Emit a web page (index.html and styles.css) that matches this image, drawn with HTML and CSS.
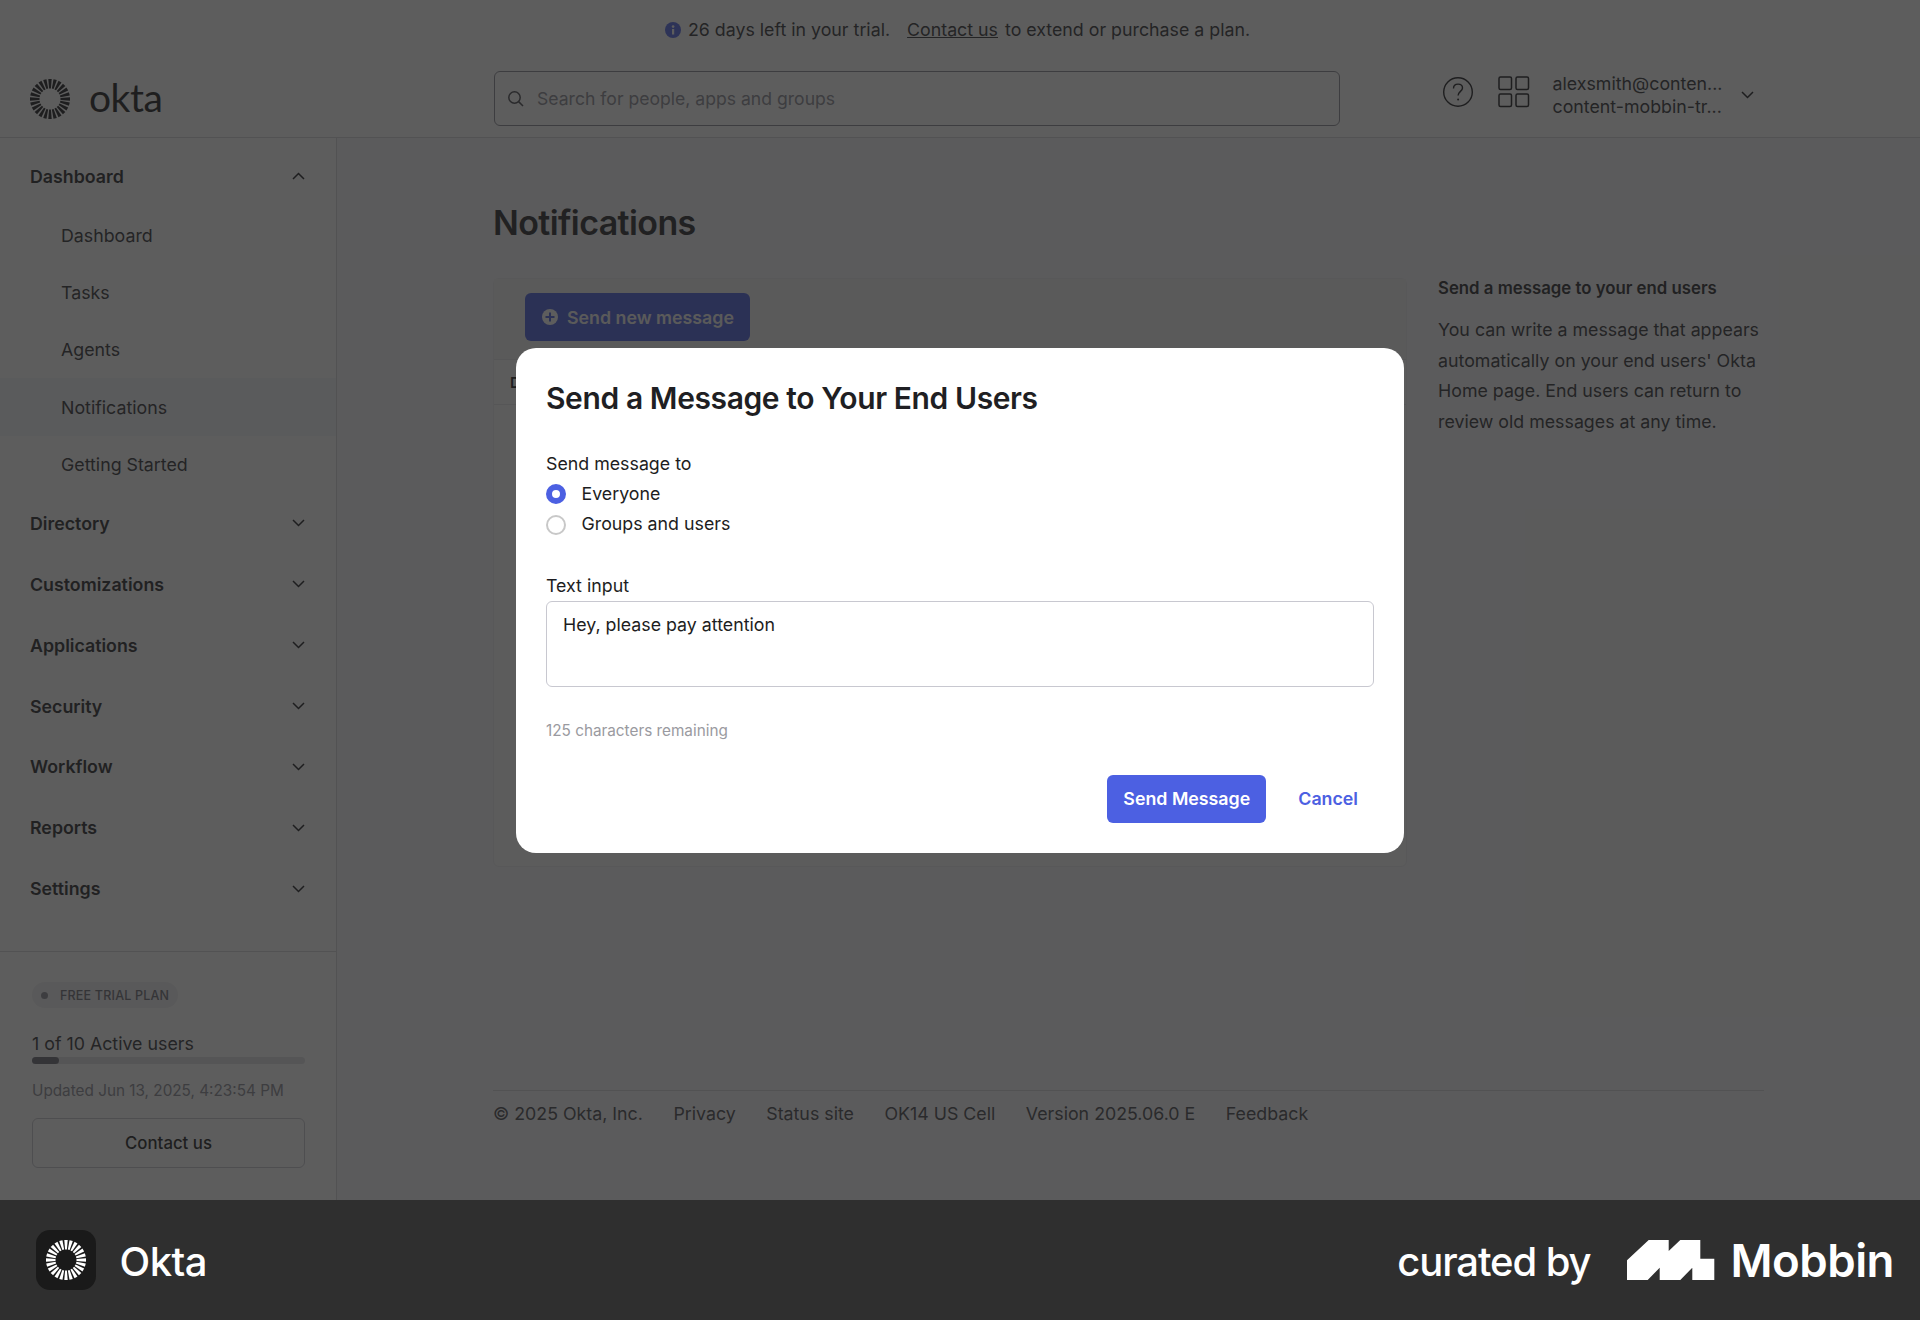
FILE: index.html
```html
<!DOCTYPE html>
<html lang="en">
<head>
<meta charset="utf-8">
<title>Okta - Notifications</title>
<link rel="stylesheet" href="styles.css">
</head>
<body>
<svg class="defs" width="0" height="0" aria-hidden="true">
  <defs>
    <g id="sunburst">
      <g id="ray-set">
        <polygon points="-.9,-10.500 .9,-10.500 1.700,-20 -1.700,-20"/>
        <polygon points="-.9,-10.500 .9,-10.500 1.700,-20 -1.700,-20" transform="rotate(15)"/>
        <polygon points="-.9,-10.500 .9,-10.500 1.700,-20 -1.700,-20" transform="rotate(30)"/>
        <polygon points="-.9,-10.500 .9,-10.500 1.700,-20 -1.700,-20" transform="rotate(45)"/>
      </g>
      <use href="#ray-set" transform="rotate(60)"/>
      <use href="#ray-set" transform="rotate(120)"/>
      <use href="#ray-set" transform="rotate(180)"/>
      <use href="#ray-set" transform="rotate(240)"/>
      <use href="#ray-set" transform="rotate(300)"/>
    </g>
    <polyline id="chev-down" points="1,1 6.5,6.5 12,1" fill="none" stroke-width="1.5"/>
  </defs>
</svg>
<div class="page">
  <div class="app">
    <div class="banner">
      <svg class="info" width="16" height="16" viewBox="0 0 16 16"><circle cx="8" cy="8" r="8" fill="#5468e8"/><rect x="7" y="7" width="2.2" height="5.5" fill="#fff"/><circle cx="8.1" cy="4.6" r="1.3" fill="#fff"/></svg>
      <span>26 days left in your trial.</span>
      <a class="banner-link">Contact us</a>
      <span class="banner-tail">to extend or purchase a plan.</span>
    </div>
    <header class="topbar">
      <div class="brand">
        <svg class="brand-mark" width="42" height="42" viewBox="-21 -21 42 42" fill="#1d1d21"><use href="#sunburst"/></svg>
        <span class="brand-name">okta</span>
      </div>
      <div class="search">
        <svg width="18" height="18" viewBox="0 0 18 18" fill="none" stroke="#4a4a50" stroke-width="1.5"><circle cx="7.5" cy="7.5" r="5.7"/><line x1="11.6" y1="11.6" x2="16" y2="16"/></svg>
        <span>Search for people, apps and groups</span>
      </div>
      <div class="top-actions">
        <svg class="help" width="32" height="32" viewBox="0 0 32 32" fill="none" stroke="#1d1d21" stroke-width="1.4"><circle cx="16" cy="16" r="14.3"/><path d="M11.5 12.4c0-2.6 2-4.3 4.6-4.3 2.5 0 4.4 1.6 4.4 3.9 0 3.3-4.4 3.6-4.4 7.6"/><circle cx="16.1" cy="23.4" r="1" fill="#1d1d21" stroke="none"/></svg>
        <svg class="apps" width="32" height="32" viewBox="0 0 32 32" fill="none" stroke="#1d1d21" stroke-width="1.5"><rect x="1" y="1" width="12.5" height="12.5" rx="1.5"/><rect x="18" y="1" width="12.5" height="12.5" rx="1.5"/><rect x="1" y="18" width="12.5" height="12.5" rx="1.5"/><rect x="18" y="18" width="12.5" height="12.5" rx="1.5"/></svg>
        <div class="account">
          <span>alexsmith@conten...</span>
          <span>content-mobbin-tr...</span>
        </div>
        <svg class="account-chev" width="13" height="8" viewBox="0 0 13 8" stroke="#1d1d21"><use href="#chev-down"/></svg>
      </div>
    </header>
    <div class="body">
      <aside class="sidebar">
        <nav class="nav">
          <div class="nav-head nav-first"><span>Dashboard</span><svg width="13" height="8" viewBox="0 0 13 8" stroke="#1d1d21" class="flip"><use href="#chev-down"/></svg></div>
          <a class="nav-sub">Dashboard</a>
          <a class="nav-sub">Tasks</a>
          <a class="nav-sub">Agents</a>
          <a class="nav-sub nav-active">Notifications</a>
          <a class="nav-sub">Getting Started</a>
          <div class="nav-head"><span>Directory</span><svg width="13" height="8" viewBox="0 0 13 8" stroke="#1d1d21"><use href="#chev-down"/></svg></div>
          <div class="nav-head"><span>Customizations</span><svg width="13" height="8" viewBox="0 0 13 8" stroke="#1d1d21"><use href="#chev-down"/></svg></div>
          <div class="nav-head"><span>Applications</span><svg width="13" height="8" viewBox="0 0 13 8" stroke="#1d1d21"><use href="#chev-down"/></svg></div>
          <div class="nav-head"><span>Security</span><svg width="13" height="8" viewBox="0 0 13 8" stroke="#1d1d21"><use href="#chev-down"/></svg></div>
          <div class="nav-head"><span>Workflow</span><svg width="13" height="8" viewBox="0 0 13 8" stroke="#1d1d21"><use href="#chev-down"/></svg></div>
          <div class="nav-head"><span>Reports</span><svg width="13" height="8" viewBox="0 0 13 8" stroke="#1d1d21"><use href="#chev-down"/></svg></div>
          <div class="nav-head"><span>Settings</span><svg width="13" height="8" viewBox="0 0 13 8" stroke="#1d1d21"><use href="#chev-down"/></svg></div>
        </nav>
        <div class="plan">
          <div class="plan-pill"><i></i>FREE TRIAL PLAN</div>
          <div class="plan-users">1 of 10 Active users</div>
          <div class="plan-bar"><div class="plan-fill"></div></div>
          <div class="plan-updated">Updated Jun 13, 2025, 4:23:54 PM</div>
          <div class="plan-btn">Contact us</div>
        </div>
      </aside>
      <main class="content">
        <h1 class="title">Notifications</h1>
        <div class="columns">
          <section class="card">
            <div class="toolbar">
              <div class="new-btn">
                <svg width="16" height="16" viewBox="0 0 16 16"><circle cx="8" cy="8" r="8" fill="#fff"/><rect x="7" y="3.5" width="2" height="9" fill="#4c60e2"/><rect x="3.5" y="7" width="9" height="2" fill="#4c60e2"/></svg>
                <span>Send new message</span>
              </div>
            </div>
            <div class="table-head">Date</div>
          </section>
          <aside class="help-col">
            <h2>Send a message to your end users</h2>
            <p>You can write a message that appears automatically on your end users' Okta Home page. End users can return to review old messages at any time.</p>
          </aside>
        </div>
        <footer class="foot">
          <span>© 2025 Okta, Inc.</span>
          <span>Privacy</span>
          <span>Status site</span>
          <span>OK14 US Cell</span>
          <span>Version 2025.06.0 E</span>
          <span>Feedback</span>
        </footer>
      </main>
    </div>
    <div class="overlay"></div>
    <div class="modal">
      <h2 class="modal-title">Send a Message to Your End Users</h2>
      <div class="field-label">Send message to</div>
      <div class="radio-row radio-first"><i class="radio radio-on"></i><span>Everyone</span></div>
      <div class="radio-row"><i class="radio"></i><span>Groups and users</span></div>
      <div class="field-label input-label">Text input</div>
      <div class="textarea">Hey, please pay attention</div>
      <div class="remaining">125 characters remaining</div>
      <div class="modal-actions">
        <div class="send-btn">Send Message</div>
        <div class="cancel-btn">Cancel</div>
      </div>
    </div>
  </div>
  <div class="credit">
    <div class="credit-app">
      <div class="credit-icon">
        <svg width="42" height="42" viewBox="-21 -21 42 42" fill="#fff"><use href="#sunburst"/></svg>
      </div>
      <span class="credit-name">Okta</span>
    </div>
    <div class="credit-by">
      <span class="curated">curated by</span>
      <svg class="mobbin-mark" width="88" height="40" viewBox="0 0 88 40"><path fill="#fff" d="M0 20.300 21.700 0H41.700V11L53.300 0H73.300V18.700H87.300V40H65.300V27.700L53.300 40H32.700V27.700L20.700 40H0Z"/></svg>
      <span class="mobbin">Mobbin</span>
    </div>
  </div>
</div>
</body>
</html>
```
FILE: styles.css
```css
* { box-sizing: border-box; }
html, body { margin: 0; padding: 0; }
body { font-family: Inter, "Liberation Sans", sans-serif; color: #1d1d21; background: #fff; }
h1, h2, p { margin: 0; }
.defs { position: absolute; }
.page { width: 1920px; height: 1320px; display: flex; flex-direction: column; overflow: hidden; }
.app { position: relative; height: 1200px; display: flex; flex-direction: column; overflow: hidden; }

.banner { height: 59px; margin-bottom: 1px; padding-right: 5px; display: flex; align-items: center; justify-content: center; gap: 6px; font-size: 17.800px; color: #333338; }
.banner-link { margin-left: 11px; text-decoration: underline; }
.banner-tail { margin-left: 1px; }
.info { margin-right: 1px; }

.topbar { height: 78px; display: flex; align-items: flex-start; border-bottom: 1px solid #d8d8dc; }
.brand { width: 494px; padding: 14px 0 0 29px; display: flex; align-items: center; gap: 18px; }
.brand-mark { margin-top: 4px; }
.brand-name { font-family: Lato, sans-serif; font-size: 39px; line-height: 42px; letter-spacing: -.5px; }
.search { width: 846px; height: 55px; margin-top: 11px; border: 1px solid #8c8c96; border-radius: 6px; display: flex; align-items: center; gap: 12px; padding-left: 12px; font-size: 17.600px; color: #8c8c96; }
.top-actions { display: flex; align-items: flex-start; margin: 13px 0 0 101.500px; }
.help, .apps { flex: none; margin-top: 3px; }
.apps { margin-left: 24px; }
.account { margin-left: 23px; display: flex; flex-direction: column; font-size: 17.800px; line-height: 22.500px; width: 188px; color: #333338; }
.account-chev { margin-top: 18px; }

.body { flex: 1; display: flex; min-height: 0; }
.sidebar { width: 337px; flex: none; border-right: 1px solid #d8d8dc; display: flex; flex-direction: column; }
.nav { flex: 1; display: flex; flex-direction: column; padding-top: 8px; }
.nav-head { height: 60.900px; padding: 0 31px 0 30px; display: flex; align-items: center; justify-content: space-between; font-size: 17.800px; font-weight: 600; color: #2a2a2e; }
.nav-first { height: 60.500px; }
.nav-sub { height: 57.300px; display: flex; align-items: center; padding-left: 61px; font-size: 17.800px; color: #333338; }
.nav-active { background: #f5f6fb; }
.flip { transform: rotate(180deg); }

.plan { height: 249px; border-top: 1px solid #d8d8dc; padding: 30px 31px 0 32px; display: flex; flex-direction: column; }
.plan-pill { align-self: flex-start; height: 26px; padding: 0 9px; background: #f0f0f2; border-radius: 13px; display: flex; align-items: center; gap: 12px; font-size: 12.500px; font-weight: 500; color: #6e6e78; letter-spacing: .2px; }
.plan-pill i { width: 7px; height: 7px; border-radius: 50%; background: #8c8c96; }
.plan-users { margin-top: 24px; font-size: 17.800px; line-height: 24px; color: #333338; }
.plan-bar { height: 7px; border-radius: 4px; background: #e1e1e5; margin-top: 1px; }
.plan-fill { width: 10%; height: 100%; background: #6e6e78; border-radius: 4px; }
.plan-updated { margin-top: 17px; font-size: 15.300px; line-height: 20px; color: #8c8c96; }
.plan-btn { margin-top: 17px; height: 50px; border: 1px solid #c8c8d0; border-radius: 6px; display: flex; align-items: center; justify-content: center; font-size: 16.800px; font-weight: 500; }

.content { flex: 1; padding: 62px 158px 0 156px; display: flex; flex-direction: column; background: #f8f8fa; }
.title { font-size: 34px; line-height: 46px; font-weight: 600; letter-spacing: -.6px; height: 46px; color: #2a2a2e; }
.columns { flex: 1; display: flex; margin-top: 32px; }
.card { width: 914px; height: 589px; border: 1px solid #ececf0; background: #fafafc; border-radius: 6px; }
.toolbar { height: 80px; padding: 14px 31px; background: #f2f2f4; }
.new-btn { width: 225px; height: 48px; background: #4c60e2; border-radius: 6px; color: #f4f4f4; display: flex; align-items: center; gap: 9px; padding-left: 17px; font-size: 17.800px; font-weight: 600; }
.table-head { height: 46px; display: flex; align-items: center; padding-left: 16px; font-size: 15px; font-weight: 600; border-top: 1px solid #e4e4e8; border-bottom: 1px solid #e4e4e8; }
.help-col { width: 326px; margin-left: 31px; margin-top: -1px; }
.help-col h2 { font-size: 16.800px; line-height: 22px; font-weight: 600; color: #2a2a2e; }
.help-col p { margin-top: 16px; font-size: 17.800px; line-height: 30.500px; color: #333338; }
.foot { height: 110px; border-top: 1px solid #d8d8dc; display: flex; gap: 30.500px; padding-top: 11px; font-size: 17.800px; line-height: 24px; color: #4a4a50; }

.overlay { position: absolute; inset: 0; background: rgba(30, 30, 30, .72); }
.modal { position: absolute; left: 516px; top: 348px; width: 888px; height: 505px; background: #fff; border-radius: 20px; padding: 34px 30px 0; display: flex; flex-direction: column; }
.modal-title { font-size: 30px; line-height: 32px; font-weight: 600; letter-spacing: -.4px; color: #1f1f23; }
.field-label { margin-top: 38px; font-size: 17.800px; line-height: 24px; }
.radio-row { height: 30.500px; display: flex; align-items: center; gap: 15.500px; font-size: 17.800px; }
.radio-first { margin-top: 2px; }
.radio { width: 20px; height: 20px; margin-top: 2px; border-radius: 50%; border: 2px solid #c8c8c8; }
.radio-on { border: 6px solid #4c60e2; background: #fff; }
.input-label { margin-top: 35px; }
.textarea { margin-top: 2.500px; height: 86px; border: 1px solid #c8c8d0; border-radius: 6px; padding: 11px 16px; font-size: 17.800px; line-height: 24px; }
.remaining { margin-top: 34.500px; font-size: 15.300px; line-height: 20px; color: #9a9aa0; }
.modal-actions { margin-top: 34px; display: flex; justify-content: flex-end; align-items: center; gap: 32px; padding-right: 16px; }
.send-btn { width: 159px; height: 48px; padding-bottom: 2px; background: #4c60e2; border-radius: 6px; color: #fff; display: flex; align-items: center; justify-content: center; font-size: 17.800px; font-weight: 600; }
.cancel-btn { margin-bottom: 2px; color: #4c60e2; font-size: 17.800px; font-weight: 600; }

.credit { height: 120px; background: #2f2f2f; color: #fff; display: flex; align-items: center; justify-content: space-between; padding: 0 26px 0 36px; }
.credit-app { display: flex; align-items: center; gap: 23.500px; font-size: 40px; font-weight: 500; letter-spacing: -.5px; }
.credit-name { padding-top: 2px; }
.credit-icon { width: 60px; height: 60px; background: #1a1a1a; border-radius: 14px; display: flex; align-items: center; justify-content: center; }
.credit-by { display: flex; align-items: center; }
.curated { font-size: 40px; font-weight: 500; letter-spacing: -1.100px; padding-top: 2px; }
.mobbin-mark { margin-left: 37px; }
.mobbin { margin-left: 15px; font-size: 45.600px; font-weight: 600; letter-spacing: -.5px; }
```
